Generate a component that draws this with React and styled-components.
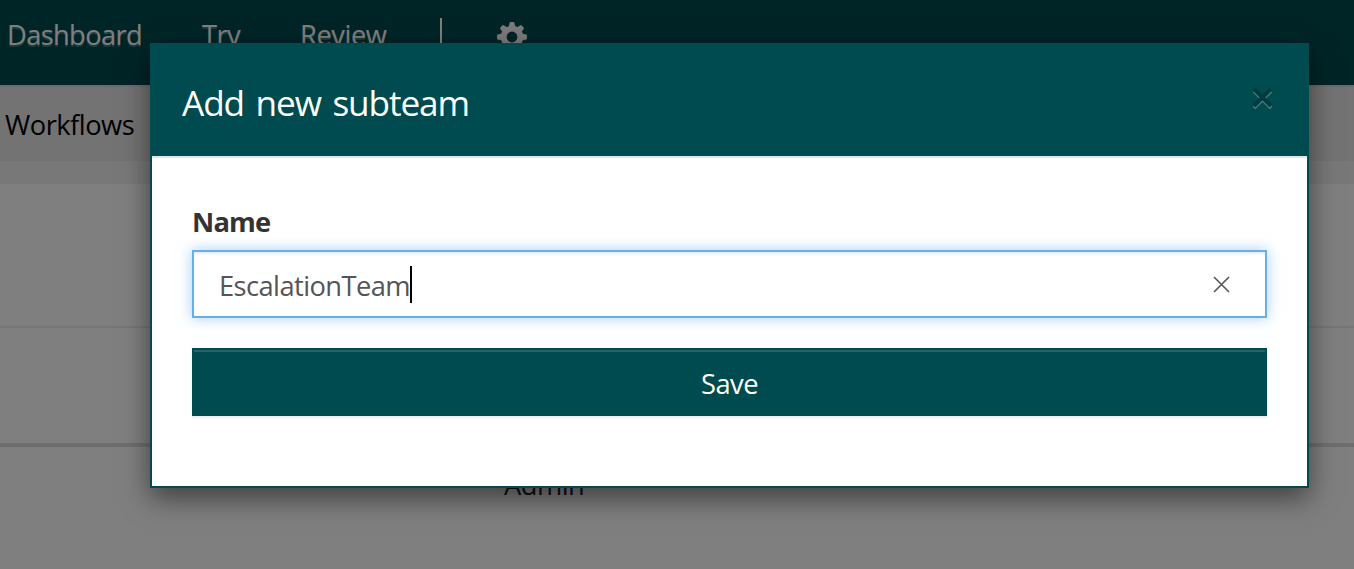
import React from "react";
import styled, { createGlobalStyle } from "styled-components";

const GlobalStyle = createGlobalStyle`
  * { box-sizing: border-box; }
  body { margin: 0; overflow: hidden; background: #fff; font-family: "Open Sans", "Noto Sans", sans-serif; font-size: 27.3px; }
`;

const Page = styled.div`
  position: relative;
  height: 569px;
  overflow: hidden;
  background: #fff;
`;

const NavBar = styled.nav`
  height: 85px;
  padding: 15px 0 0 7px;
  display: flex;
  align-items: flex-start;
  background: #004b4f;
  color: #fff;
`;

const NavItem = styled.span`
  flex: none;
  width: ${(p) => p.$width}px;
  line-height: 40px;
  letter-spacing: ${(p) => p.$tracking}px;
  text-shadow: 0 2px 0 rgba(255, 255, 255, 0.25);
  white-space: nowrap;
`;

const NavDivider = styled.span`
  flex: none;
  width: 2px;
  height: 40px;
  margin: 3px 55px 0 0;
  background: #fff;
`;

const GearIcon = styled.svg`
  flex: none;
  width: 30px;
  height: 30px;
  margin-top: 7px;
  fill: #f4f4f4;
`;

const SubNav = styled.div`
  height: 76px;
  padding: 20px 0 0 5px;
  background: #e6e6e6;
  box-shadow: inset 0 2px 0 #d8d8d8;
  color: #000;
  line-height: 40px;
  letter-spacing: ${(p) => p.$tracking}px;
`;

const Strip = styled.div`
  height: 23px;
  background: #f1f1f1;
`;

const Row = styled.div`
  height: ${(p) => p.$height}px;
  border-bottom: ${(p) => p.$line}px solid ${(p) => p.$lineColor};
`;

const TableCell = styled.div`
  padding: 18px 0 0 504px;
  line-height: 40px;
  color: #222;
  letter-spacing: ${(p) => p.$tracking}px;
`;

const Backdrop = styled.div`
  position: absolute;
  inset: 0;
  padding: 43px 45px 0 150px;
  background: rgba(0, 0, 0, 0.5);
`;

const Dialog = styled.section`
  height: 445px;
  border: 2px solid #004b4f;
  background: #fff;
  box-shadow: 0 10px 26px rgba(0, 0, 0, 0.5);
`;

const DialogHeader = styled.header`
  height: 113px;
  padding: 0 34px 0 30px;
  display: flex;
  justify-content: space-between;
  align-items: flex-start;
  background: #004b4f;
  border-bottom: 2px solid #e5e5e5;
  color: #fff;
`;

const Title = styled.h1`
  margin: 31px 0 0;
  font-size: 35.2px;
  font-weight: 400;
  line-height: 52px;
  word-spacing: 3.5px;
  letter-spacing: ${(p) => p.$tracking}px;
`;

const CloseIcon = styled.svg`
  width: 21px;
  height: 24px;
  margin-top: 41px;
  fill: none;
`;

const Form = styled.form`
  padding: 42px 40px 0;
`;

const Label = styled.label`
  display: block;
  height: 50px;
  font-weight: 700;
  line-height: 44px;
  letter-spacing: ${(p) => p.$tracking}px;
  color: #333;
`;

const Field = styled.div`
  height: 68px;
  padding: 0 35px 0 25px;
  display: flex;
  align-items: center;
  border: 2px solid #66afe9;
  box-shadow: inset 0 2px 2px rgba(0, 0, 0, 0.075), 0 0 13px rgba(102, 175, 233, 0.6);
  color: #555;
`;

const Value = styled.span`
  line-height: 40px;
  letter-spacing: ${(p) => p.$tracking}px;
  padding-top: 3px;
`;

const Caret = styled.span`
  width: 2px;
  height: 37px;
  background: #000;
`;

const ClearIcon = styled.svg`
  width: 17px;
  height: 17px;
  margin-left: auto;
  fill: none;
  stroke: #555;
  stroke-width: 1.6;
`;

const SaveButton = styled.button`
  display: block;
  width: 100%;
  height: 68px;
  margin-top: 30px;
  padding: 2px 0 0;
  border: 2px solid #004b4f;
  background: #004b4f;
  box-shadow: inset 0 2px 0 rgba(255, 255, 255, 0.15), 0 2px 2px rgba(0, 0, 0, 0.075);
  color: #fff;
  font: inherit;
  letter-spacing: ${(p) => p.$tracking}px;
`;

const TEETH = [0, 45, 90, 135, 180, 225, 270, 315];

function Gear() {
  return (
    <GearIcon viewBox="-15 -15 30 30">
      <path fillRule="evenodd" d="M0-11.2A11.2 11.2 0 1 1 0 11.2A11.2 11.2 0 1 1 0-11.2ZM0-5.4A5.4 5.4 0 1 0 0 5.4A5.4 5.4 0 1 0 0-5.4Z" />
      {TEETH.map((a) => (
        <path key={a} transform={`rotate(${a})`} d="M-3.4-10L-2.4-14.2Q-2.2-15-1.4-15H1.4Q2.2-15 2.4-14.2L3.4-10Z" />
      ))}
    </GearIcon>
  );
}

export default function App() {
  return (
    <>
      <GlobalStyle />
      <Page>
        <NavBar>
          <NavItem $width={195} $tracking={-0.65}>Dashboard</NavItem>
          <NavItem $width={98} $tracking={-0.6}>Try</NavItem>
          <NavItem $width={140} $tracking={-0.45}>Review</NavItem>
          <NavDivider />
          <Gear />
        </NavBar>
        <SubNav $tracking={-0.5}>Workflows</SubNav>
        <Strip />
        <Row $height={144} $line={2} $lineColor="#ececec" />
        <Row $height={119} $line={4} $lineColor="#dddddd" />
        <TableCell $tracking={-0.5}>Admin</TableCell>
        <Backdrop>
          <Dialog>
            <DialogHeader>
              <Title $tracking={-1.1}>Add new subteam</Title>
              <CloseIcon viewBox="0 0 21 24">
                <path d="M2 5L19 22M19 5L2 22" stroke="#4d8184" strokeWidth="3.5" />
                <path d="M2 3L19 20M19 3L2 20" stroke="#003c3f" strokeWidth="4" />
              </CloseIcon>
            </DialogHeader>
            <Form>
              <Label $tracking={-0.8}>Name</Label>
              <Field>
                <Value $tracking={-0.58}>EscalationTeam</Value>
                <Caret />
                <ClearIcon viewBox="0 0 17 17"><path d="M1 1L16 16M16 1L1 16" /></ClearIcon>
              </Field>
              <SaveButton type="button" $tracking={-0.5}>Save</SaveButton>
            </Form>
          </Dialog>
        </Backdrop>
      </Page>
    </>
  );
}
